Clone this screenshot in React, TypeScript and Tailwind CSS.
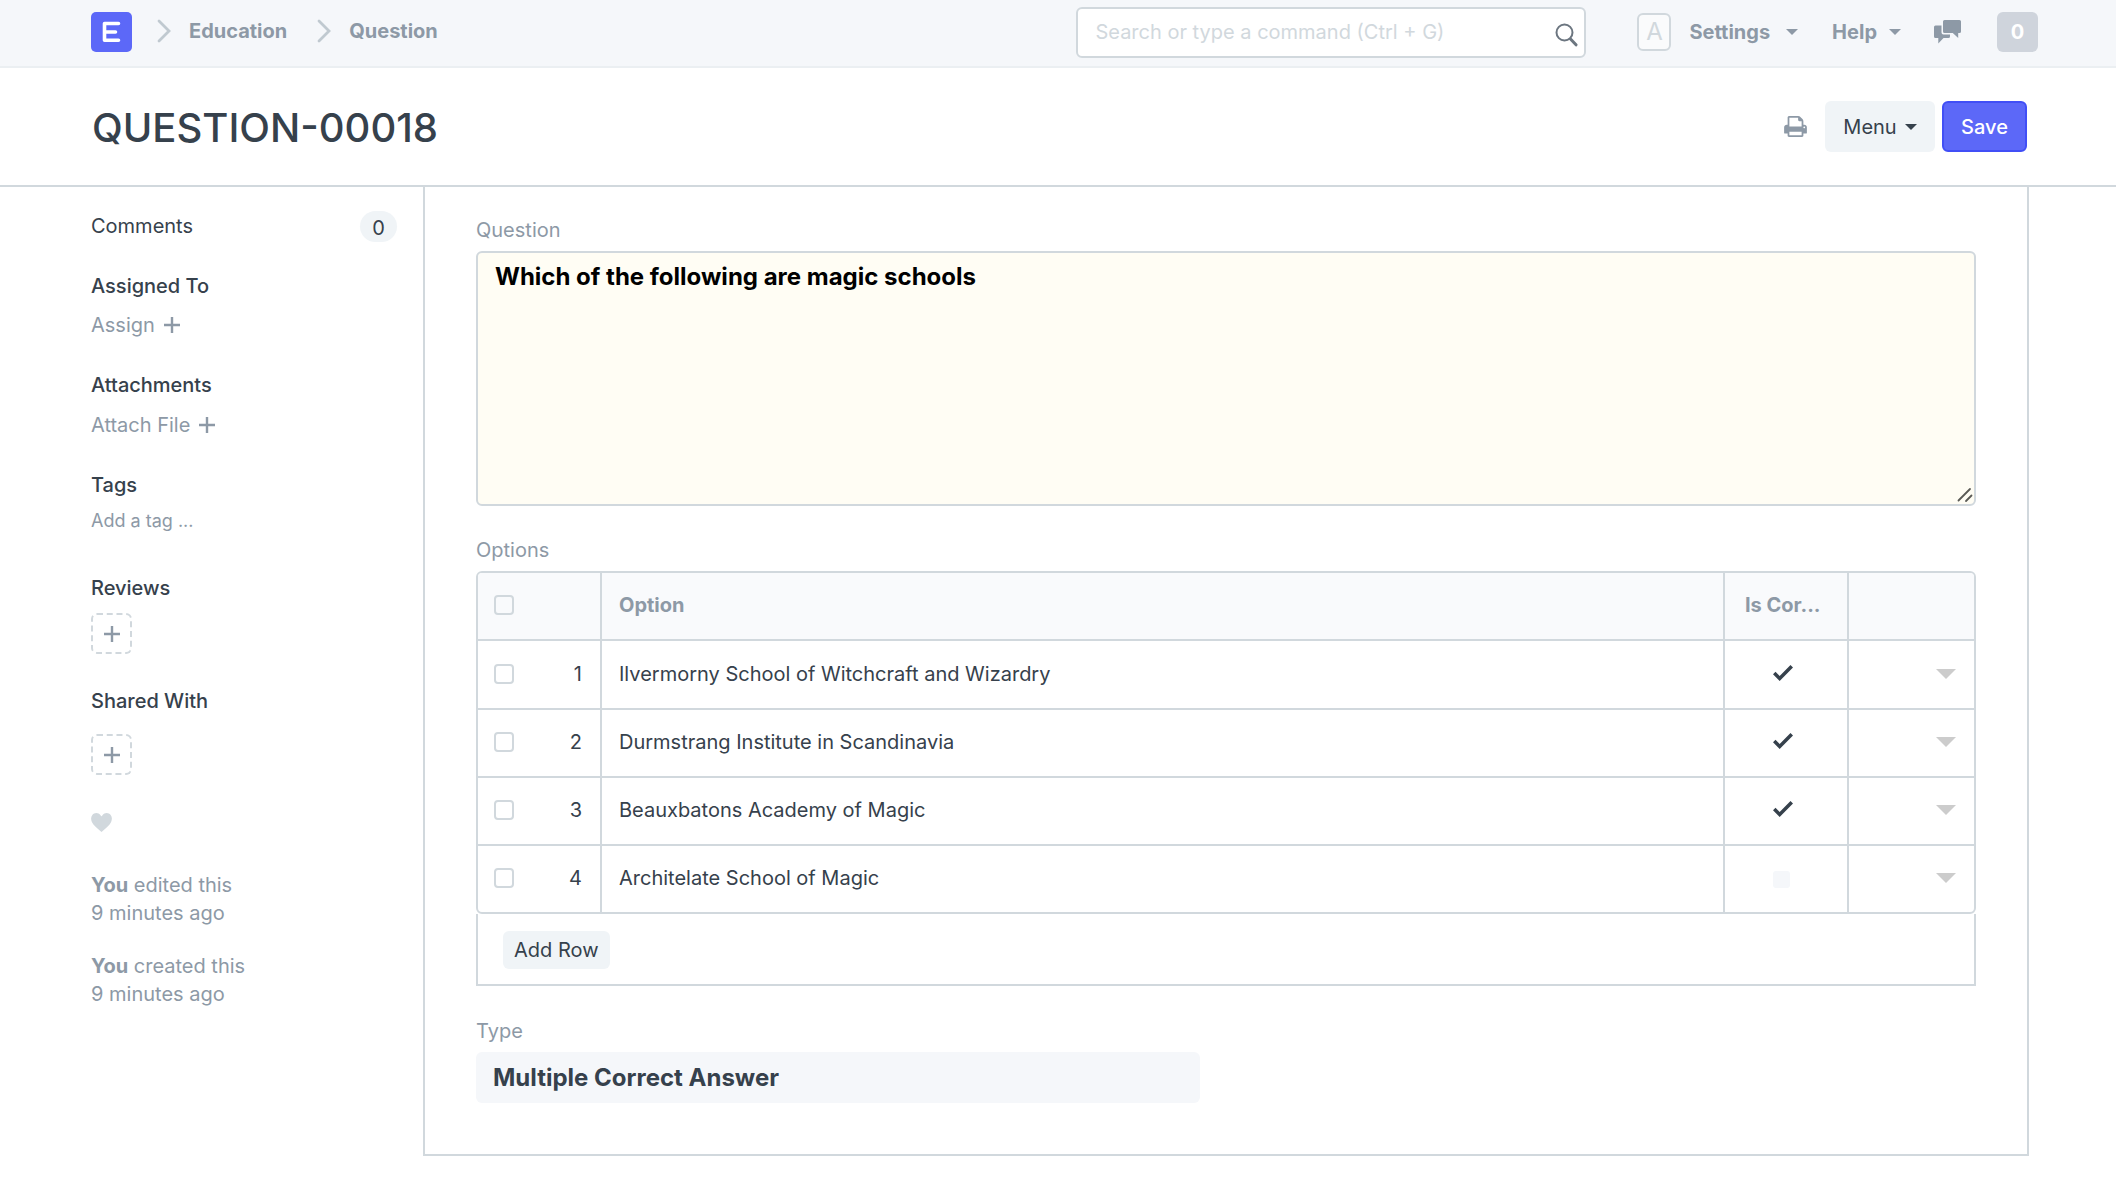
import React from "react";

const options = [
  { text: "Ilvermorny School of Witchcraft and Wizardry", correct: true },
  { text: "Durmstrang Institute in Scandinavia", correct: true },
  { text: "Beauxbatons Academy of Magic", correct: true },
  { text: "Architelate School of Magic", correct: false },
];

function Caret({ className }: { className: string }) {
  return (
    <svg viewBox="0 0 12 6" className={className} fill="currentColor" aria-hidden="true">
      <path d="M0 0h12L6 6z" />
    </svg>
  );
}

function Chevron() {
  return (
    <svg viewBox="0 0 14 24" className="h-6 w-3.5 shrink-0" fill="none" stroke="#c0c9d0" strokeWidth="2.8" aria-hidden="true">
      <path d="M2 2L12 12 2 22" strokeLinecap="round" />
    </svg>
  );
}

function Plus() {
  return (
    <svg viewBox="0 0 16 16" className="size-4" fill="none" stroke="currentColor" strokeWidth="2.4" aria-hidden="true">
      <path d="M8 0v16M0 8h16" />
    </svg>
  );
}

function CheckMark() {
  return (
    <svg viewBox="0 3.5 12 9.5" className="h-4 w-5" fill="#36414c" role="img" aria-label="Yes">
      <path d="M12 5l-8 8-4-4 1.5-1.5L4 10l6.5-6.5z" />
    </svg>
  );
}

function Navbar() {
  return (
    <header className="border-b-2 border-[#ebeff2] bg-[#f5f7fa]">
      <div className="flex h-[66px] items-center pr-[78px] pb-0.5 pl-[91px] font-bold text-[#8d99a6]">
        <nav className="flex items-center" aria-label="Breadcrumb">
          <a href="#home" aria-label="Home" className="block size-[41px]">
            <svg viewBox="0 0 41 41" className="size-[41px]" aria-hidden="true">
              <rect width="41" height="40" rx="5" fill="#5c68f8" />
              <path d="M27.5 11.5H13.5V28.3H27.5M13.5 20H24.5" fill="none" stroke="#fff" strokeWidth="3.6" strokeLinecap="round" strokeLinejoin="round" />
            </svg>
          </a>
          <span className="ml-[25px] flex items-center gap-[18px] pb-0.5">
            <Chevron />
            <a href="#education">Education</a>
          </span>
          <span className="ml-[30px] flex items-center gap-[18px] pb-0.5">
            <Chevron />
            <a href="#question">Question</a>
          </span>
        </nav>

        <div className="relative ml-auto w-[510px]">
          <input
            type="text"
            aria-label="Search or type a command"
            placeholder="Search or type a command (Ctrl + G)"
            className="h-[51px] w-full rounded-md border-2 border-[#d1d8dd] bg-white pr-12 pl-[17px] font-normal text-[#36414c] placeholder:text-[#d1d8dd] placeholder:opacity-100"
          />
          <svg viewBox="0 0 23 24" className="absolute top-4 right-2 h-6 w-[23px]" fill="none" stroke="#6c7680" aria-hidden="true">
            <circle cx="9.5" cy="9.5" r="8" strokeWidth="2" />
            <path d="M15.5 16L21 21.8" strokeWidth="3" strokeLinecap="round" />
          </svg>
        </div>

        <span className="ml-[51px] flex h-[38px] w-[34px] items-center justify-center rounded-md border-2 border-[#d1d8dd] bg-[#fafbfc] text-2xl font-normal text-[#d1d8dd]">
          A
        </span>
        <button className="ml-[18px] flex items-center gap-4">
          Settings
          <Caret className="h-1.5 w-3" />
        </button>
        <button className="ml-[34px] flex items-center gap-3">
          Help
          <Caret className="h-1.5 w-3" />
        </button>
        <button aria-label="Chat" className="ml-[33px]">
          <svg viewBox="0 0 27 24" className="h-6 w-[27px]" fill="#8d99a6" aria-hidden="true">
            <path d="M10.5 0H25.500q1.500 0 1.500 1.500V11.500q0 1.500-1.500 1.500H24.200V18L18.800 13H10.500Q9 13 9 11.500V1.500Q9 0 10.500 0z" />
            <path d="M1.500 5.500H7.500V12.500Q7.500 14.500 9.500 14.500H16V16.500Q16 18 14.500 18H9.500L4.300 23.500V18H1.500Q0 18 0 16.500V7Q0 5.500 1.500 5.500z" />
          </svg>
        </button>
        <button aria-label="0 notifications" className="ml-9 flex h-10 w-[41px] items-center justify-center rounded-md bg-[#cfd4dc] text-white">
          0
        </button>
      </div>
    </header>
  );
}

function PageHead() {
  return (
    <div className="flex h-[119px] items-center border-b-2 border-[#d1d8dd] pr-[89px] pl-[92px]">
      <h1 className="mr-auto pt-0.5 text-[40px] leading-[48px] font-medium">QUESTION-00018</h1>
      <button aria-label="Print">
        <svg viewBox="0 128 1664 1536" className="h-[21px] w-[23px]" fill="#8d99a6" aria-hidden="true">
          <path d="M384 1536h896v-256h-896v256zM384 896h896v-384h-160q-40 0-68-28t-28-68v-160h-640v640zM1536 960q0-26-19-45t-45-19-45 19-19 45 19 45 45 19 45-19 19-45zM1664 960v416q0 13-9.500 22.500t-22.500 9.500h-224v160q0 40-28 68t-68 28h-960q-40 0-68-28t-28-68v-160h-224q-13 0-22.500-9.500t-9.500-22.500v-416q0-79 56.500-135.500t135.500-56.500h64v-544q0-40 28-68t68-28h672q40 0 88 20t76 48l152 152q28 28 48 76t20 88v256h64q79 0 135.500 56.500t56.500 135.500z" />
        </svg>
      </button>
      <button className="ml-[18px] flex h-[51px] w-[110px] items-center justify-center gap-2 rounded-md bg-[#f0f4f7]">
        Menu
        <Caret className="h-1.5 w-3" />
      </button>
      <button className="ml-[7px] h-[51px] w-[85px] rounded-md border-2 border-[#414ff6] bg-[#5c68f8] font-medium text-white">
        Save
      </button>
    </div>
  );
}

function AddBox({ label }: { label: string }) {
  return (
    <button aria-label={label} className="flex size-[41px] items-center justify-center rounded-md border-2 border-dashed border-[#d1d8dd]">
      <Plus />
    </button>
  );
}

function Sidebar() {
  return (
    <aside className="w-[332px] shrink-0 pt-6 pr-[26px] pl-0 text-[#8d99a6]">
      <div className="flex items-center justify-between text-[#36414c]">
        <a href="#comments" className="pb-0.5">Comments</a>
        <span className="flex h-[31px] w-[37px] items-center justify-center rounded-full bg-[#f0f4f7] pt-0.5">0</span>
      </div>
      <h2 className="mt-[30px] font-medium text-[#36414c]">Assigned To</h2>
      <button className="mt-[11px] flex items-center gap-[9px]">
        Assign <Plus />
      </button>
      <h2 className="mt-8 font-medium text-[#36414c]">Attachments</h2>
      <button className="mt-3 flex items-center gap-[9px]">
        Attach File <Plus />
      </button>
      <h2 className="mt-8 font-medium text-[#36414c]">Tags</h2>
      <input
        type="text"
        aria-label="Add a tag"
        placeholder="Add a tag ..."
        className="mt-2 block h-7 w-full text-lg placeholder:text-[#8d99a6] placeholder:opacity-100"
      />
      <h2 className="mt-[39px] mb-[11px] font-medium text-[#36414c]">Reviews</h2>
      <AddBox label="Add review" />
      <h2 className="mt-[33px] mb-[19px] font-medium text-[#36414c]">Shared With</h2>
      <AddBox label="Share" />
      <button aria-label="Like" className="mt-[38px] block">
        <svg viewBox="0 2 12 11" className="h-[19px] w-[21px]" fill="#d1d8dd" aria-hidden="true">
          <path d="M11.200 3c-.52-.63-1.250-.95-2.200-1-.97 0-1.690.42-2.200 1-.51.58-.78.92-.8 1-.02-.08-.28-.42-.8-1-.52-.58-1.170-1-2.200-1-.95.05-1.690.38-2.200 1-.52.61-.78 1.280-.8 2 0 .52.09 1.520.67 2.670C1.250 8.820 3.010 10.610 6 13c2.980-2.390 4.770-4.170 5.340-5.330C11.910 6.510 12 5.500 12 5c-.02-.72-.28-1.390-.8-2z" />
        </svg>
      </button>
      <p className="mt-[39px]">
        <b>You</b> edited this
        <br />9 minutes ago
      </p>
      <p className="mt-[25px]">
        <b>You</b> created this
        <br />9 minutes ago
      </p>
    </aside>
  );
}

const box =
  "block size-5 shrink-0 appearance-none rounded-[4px] border-2 border-[#d1d8dd] checked:bg-[#5c68f8]";

function OptionsGrid() {
  return (
    <section aria-labelledby="options-label">
      <h3 id="options-label" className="mt-[30px] mb-[7px] text-[#8d99a6]">Options</h3>
      <div className="overflow-hidden rounded-md border-2 border-[#d1d8dd]">
        <table className="w-full table-fixed border-separate border-spacing-0 text-left">
          <colgroup>
            <col className="w-[124px]" />
            <col />
            <col className="w-[124px]" />
            <col className="w-[125px]" />
          </colgroup>
          <thead>
            <tr className="h-[68px] bg-[#f9fafc] text-[#8d99a6]">
              <th className="border-r-2 border-b-2 border-[#d1d8dd] pb-0.5 pl-4">
                <input type="checkbox" aria-label="Select all rows" className={box} />
              </th>
              <th className="border-r-2 border-b-2 border-[#d1d8dd] pb-0.5 pl-[17px] font-bold">Option</th>
              <th className="border-r-2 border-b-2 border-[#d1d8dd] pb-0.5 pl-5 font-bold" title="Is Correct">Is Cor...</th>
              <th className="border-b-2 border-[#d1d8dd]" />
            </tr>
          </thead>
          <tbody>
            {options.map((o, i) => (
              <tr key={o.text} className="group h-[68px] first:h-[69px] last:h-[66px]">
                <td className="border-r-2 border-b-2 border-[#d1d8dd] pr-[18px] pb-0.5 pl-4 group-last:border-b-0">
                  <div className="flex items-center justify-between">
                    <input type="checkbox" aria-label={`Select row ${i + 1}`} className={box} />
                    <span>{i + 1}</span>
                  </div>
                </td>
                <td className="border-r-2 border-b-2 border-[#d1d8dd] pb-0.5 pl-[17px] group-last:border-b-0">{o.text}</td>
                <td className="border-r-2 border-b-2 border-[#d1d8dd] pb-1 pl-12 group-last:border-b-0 group-last:pb-0">
                  {o.correct ? (
                    <CheckMark />
                  ) : (
                    <input type="checkbox" disabled aria-label="Is correct" className="block size-[17px] appearance-none rounded-[3px] bg-[#f5f7fa]" />
                  )}
                </td>
                <td className="border-b-2 border-[#d1d8dd] pr-[18px] pb-0.5 group-last:border-b-0">
                  <button aria-label={`Open row ${i + 1}`} className="ml-auto block text-[#ccc]">
                    <Caret className="h-2.5 w-5" />
                  </button>
                </td>
              </tr>
            ))}
          </tbody>
        </table>
      </div>
      <div className="border-2 border-t-0 border-[#d1d8dd] px-[25px] pt-[17px] pb-[15px]">
        <button className="block h-[38px] rounded-md bg-[#f0f4f7] px-[11px]">Add Row</button>
      </div>
    </section>
  );
}

export default function App() {
  return (
    <div className="min-h-screen bg-white font-['Inter',sans-serif] text-[20px] leading-7 text-[#36414c]">
      <Navbar />
      <PageHead />
      <div className="flex pr-[87px] pl-[91px]">
        <Sidebar />
        <main className="min-w-0 flex-1 border-2 border-t-0 border-[#d1d8dd] px-[51px] pt-[29px] pb-[51px]">
          <label htmlFor="question" className="block text-[#8d99a6]">Question</label>
          <div className="relative mt-[7px]">
            <textarea
              id="question"
              defaultValue="Which of the following are magic schools"
              className="block h-[255px] w-full resize-none rounded-md border-2 border-[#d1d8dd] bg-[#fffdf4] px-[17px] py-[7px] text-2xl leading-[34px] font-bold text-black"
            />
            <svg viewBox="0 0 16 16" className="absolute right-[3px] bottom-[3px] size-4" stroke="#5a5a55" strokeWidth="1.8" strokeLinecap="round" aria-hidden="true">
              <path d="M1.500 13.500L13 2M9 14l5.500-5.500" />
            </svg>
          </div>
          <OptionsGrid />
          <h3 className="mt-[31px] text-[#8d99a6]">Type</h3>
          <div className="mt-[7px] w-[calc(50%-26px)] rounded-md bg-[#f5f7fa] px-[17px] py-[9px] text-2xl leading-[33px] font-bold">
            Multiple Correct Answer
          </div>
        </main>
      </div>
    </div>
  );
}
